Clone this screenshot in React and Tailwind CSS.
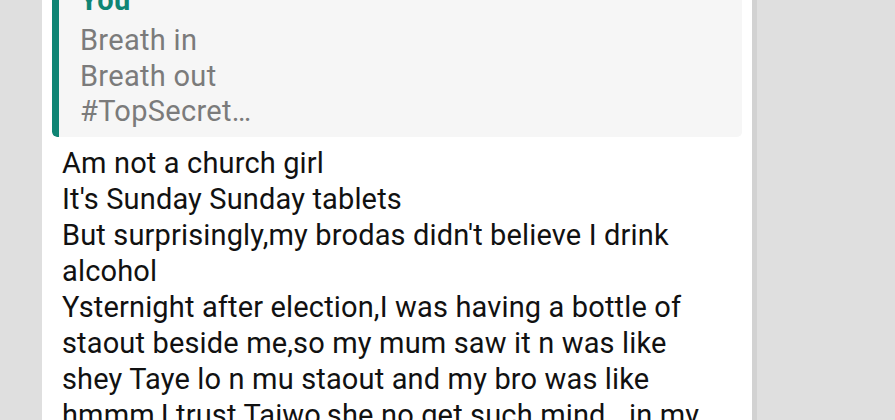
import React from 'react';

const quoteLines = ['Breath in', 'Breath out', '#TopSecret…'];

const bodyLines = [
  'Am not a church girl',
  "It's Sunday Sunday tablets",
  "But surprisingly,my brodas didn't believe I drink",
  'alcohol',
  'Ysternight after election,I was having a bottle of',
  'staout beside me,so my mum saw it n was like',
  'shey Taye lo n mu staout and my bro was like',
  'hmmm,I trust Taiwo,she no get such mind...in my',
];

export default function App() {
  return (
    <div className="h-[420px] w-[895px] overflow-hidden bg-[#dfdfdf] font-['Roboto',sans-serif]">
      <div className="ml-[42px] w-[710px] h-full flex flex-col bg-white border-r-[5px] border-[#d2d2d2] box-content">
        <div className="-mt-[18px] px-[10px]">
          {/* quoted message */}
          <div className="flex rounded-[5px] bg-[#f6f6f6] overflow-hidden">
            <div className="w-[7px] shrink-0 bg-[#0f8574] rounded-l-[5px]" />
            <div className="pl-[21px] pb-[7px] text-[29px] leading-[36px] tracking-[0.3px]">
              <div className="font-bold text-[#0f8574] mb-[5px]">You</div>
              {quoteLines.map((l) => (
                <div key={l} className="text-[#7b7b7b] leading-[35.5px]">{l}</div>
              ))}
            </div>
          </div>
          {/* message body */}
          <div className="pt-[8px] pl-[10px] text-[29px] leading-[36px] tracking-[0.15px] text-[#111111]">
            {bodyLines.map((l, i) => (
              <div key={i} className="whitespace-nowrap">{l}</div>
            ))}
          </div>
        </div>
      </div>
    </div>
  );
}
